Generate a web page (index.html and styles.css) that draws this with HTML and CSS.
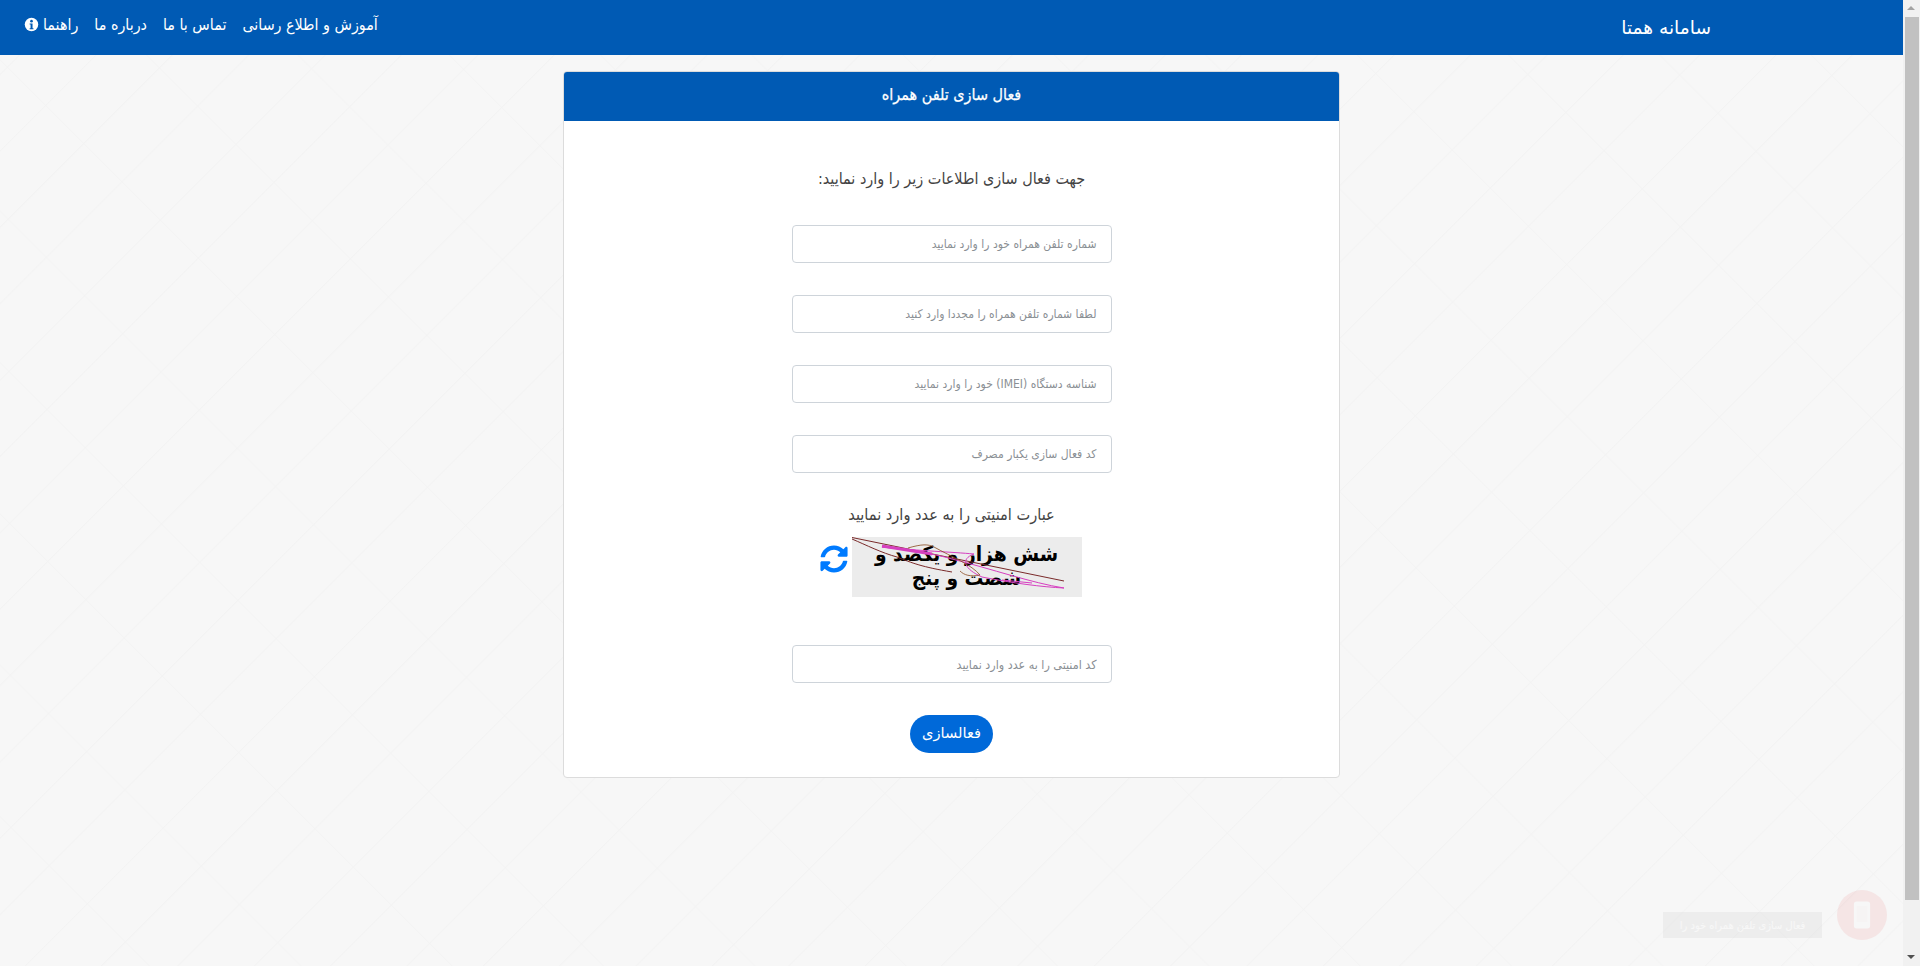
FILE: index.html
```html
<!DOCTYPE html>
<html lang="fa" dir="rtl">
<head>
<meta charset="utf-8">
<title>سامانه همتا</title>
<link rel="stylesheet" href="styles.css">
</head>
<body>
<div class="app">
  <div class="page">
    <header class="navbar">
      <a class="brand">سامانه همتا</a>
      <nav class="nav">
        <a class="nav-link">آموزش و اطلاع رسانی</a>
        <a class="nav-link">تماس با ما</a>
        <a class="nav-link">درباره ما</a>
        <a class="nav-link help">راهنما
          <svg class="info" viewBox="0 0 16 16"><circle cx="8" cy="8" r="7.2" fill="#fff"/><circle cx="8" cy="4.4" r="1.4" fill="#005ab4"/><path d="M6 6.9h3.1v5h1v1.2H6v-1.2h1v-3.8H6z" fill="#005ab4"/></svg>
        </a>
      </nav>
    </header>
    <main class="main">
      <section class="card">
        <div class="card-head">فعال سازی تلفن همراه</div>
        <form class="card-body">
          <h2 class="lead">جهت فعال سازی اطلاعات زیر را وارد نمایید:</h2>
          <input class="field" type="text" placeholder="شماره تلفن همراه خود را وارد نمایید">
          <input class="field" type="text" placeholder="لطفا شماره تلفن همراه را مجددا وارد کنید">
          <input class="field" type="text" placeholder="شناسه دستگاه (IMEI) خود را وارد نمایید">
          <input class="field" type="text" placeholder="کد فعال سازی یکبار مصرف">
          <p class="cap-label">عبارت امنیتی را به عدد وارد نمایید</p>
          <div class="cap-row">
            <div class="captcha">
              <div class="cap-text">شش هزار و یکصد و<br>شصت و پنج</div>
              <svg class="cap-lines" viewBox="0 0 230 60" fill="none">
                <path d="M0 0.5L212 44" stroke="#7a2a2a" stroke-width="1"/>
                <path d="M0 2C14 8 30 16 45 20C60 26 70 30 100 35" stroke="#7a2a2a" stroke-width="1"/>
                <path d="M30 10C70 14 100 15 122 17C108 22 112 32 130 40C160 46 190 50 212 51C180 46 140 32 100 22C80 16 50 12 30 10Z" stroke="#d63fc0" stroke-width="1"/>
                <path d="M30 9L80 17" stroke="#d63fc0" stroke-width="3"/>
                <path d="M56 11C70 7 76 7 82 10C100 20 120 28 128 38C118 40 112 38 108 34" stroke="#8a4a20" stroke-width="0.8"/>
                <path d="M150 43L180 46" stroke="#d63fc0" stroke-width="1"/>
              </svg>
            </div>
            <svg class="refresh" viewBox="0 0 512 512"><path fill="#007bff" d="M370.72 133.28C339.458 104.008 298.888 87.962 255.848 88c-77.458.068-144.328 53.178-162.791 126.85-1.344 5.363-6.122 9.15-11.651 9.15H24.103c-7.498 0-13.194-6.807-11.807-14.176C33.933 94.924 134.813 8 256 8c66.448 0 126.791 26.136 171.315 68.685L463.03 40.97C478.149 25.851 504 36.559 504 57.941V192c0 13.255-10.745 24-24 24H345.941c-21.382 0-32.09-25.851-16.971-40.971l41.75-41.749zM32 296h134.059c21.382 0 32.09 25.851 16.971 40.971l-41.75 41.75c31.262 29.273 71.835 45.319 114.876 45.28 77.418-.07 144.315-53.144 162.787-126.849 1.344-5.363 6.122-9.15 11.651-9.15h57.304c7.498 0 13.194 6.807 11.807 14.176C478.067 417.076 377.187 504 256 504c-66.448 0-126.791-26.136-171.315-68.685L48.97 471.03C33.851 486.149 8 475.441 8 454.059V320c0-13.255 10.745-24 24-24z"/></svg>
          </div>
          <input class="field field-cap" type="text" placeholder="کد امنیتی را به عدد وارد نمایید">
          <button class="btn" type="button">فعالسازی</button>
        </form>
      </section>
    </main>
    <div class="float">
      <span class="float-label">فعال سازی تلفن همراه خود را</span>
      <span class="float-btn"><svg viewBox="0 0 20 32" class="phone"><rect x="1" y="1" width="18" height="30" rx="3" fill="#fff"/><rect x="4" y="6" width="12" height="18" fill="#f5d5d5"/></svg></span>
    </div>
  </div>
  <aside class="scrollbar" dir="ltr">
    <span class="arrow up"></span>
    <span class="thumb"></span>
    <span class="arrow down"></span>
  </aside>
</div>
</body>
</html>
```
FILE: styles.css
```css
*{box-sizing:border-box}
html,body{margin:0;height:100%;overflow:hidden}
body{font-family:"DejaVu Sans Condensed","DejaVu Sans",sans-serif;font-stretch:condensed;color:#212529;font-size:14px;background:#f6f6f6}
.app{display:flex;height:966px;direction:ltr}
.page{flex:1;position:relative;direction:rtl;overflow:hidden;
background-color:#f7f7f7;
background-image:
 repeating-linear-gradient(135deg,transparent 0 52px,#f3f3f3 52.5px,transparent 54px),
 repeating-linear-gradient(45deg,transparent 0 105px,#f4f4f4 105.5px,transparent 107px);}
.navbar{height:55px;background:#005ab4;display:flex;align-items:center;justify-content:space-between;padding:0 16px}
.brand{color:#fff;font-family:"DejaVu Sans",sans-serif;font-stretch:normal;font-size:18.6px;margin-right:176px}
.nav{display:flex}
.nav-link{color:#fff;font-size:15.9px;padding:0 8px;margin-top:-6px;display:flex;align-items:center;gap:4px}
.info{width:15px;height:15px}
.main{display:flex;justify-content:center;padding-top:16px}
.card{width:777px;background:#fff;border:1px solid #dcdcdc;border-radius:4px;height:707px;overflow:hidden}
.card-head{height:50px;padding-bottom:4px;background:#005ab4;color:#fff;font-size:16px;-webkit-text-stroke:.25px #fff;display:flex;align-items:center;justify-content:center;margin:-1px;border-radius:4px 4px 0 0;font-weight:400}
.card-body{display:flex;flex-direction:column;align-items:center}
.lead{font-weight:400;font-size:16px;color:#444;margin:48px 0 0;line-height:22px}
.field{display:block;width:320px;height:38px;margin-top:32px;border:1px solid #ced4da;border-radius:4px;padding:0 14px;font:12px "DejaVu Sans Condensed","DejaVu Sans",sans-serif;font-stretch:condensed;background:#fff;direction:rtl}
.lead + .field{margin-top:35px}
.field::placeholder{color:#8a8f94;opacity:1}
.cap-label{margin:31px 0 0;font-size:16.2px;color:#444;line-height:22px}
.cap-row{display:flex;align-items:center;gap:4px;margin-top:11px;margin-right:2px;width:262px}
.captcha{position:relative;width:230px;height:60px;background:#ececec;direction:rtl;flex:none}
.cap-text{font:700 20.8px/24px "DejaVu Sans Condensed","DejaVu Sans",sans-serif;font-stretch:condensed;color:#000;text-align:center;padding:5px 2px 0}
.cap-lines{position:absolute;inset:0;width:100%;height:100%}
.refresh{width:28px;height:28px;margin-bottom:16px;flex:none}
.field-cap{margin-top:48px;font-size:12.4px}
.btn{margin-top:32px;width:83px;height:38px;border:0;border-radius:19px;background:#0069d9;color:#fff;font:500 14.6px "DejaVu Sans",sans-serif;padding:0 0 3px}
.float{position:absolute;left:1663px;top:890px;display:flex;flex-direction:row-reverse;align-items:center;gap:15px;width:225px;opacity:.08}
.float-label{width:159px;height:26px;background:#888;color:#fff;font-size:11px;display:flex;align-items:center;justify-content:center;margin-top:20px;white-space:nowrap;overflow:hidden}
.float-btn{width:50px;height:50px;border-radius:50%;background:#e02020;display:flex;align-items:center;justify-content:center}
.phone{width:18px;height:30px}
.scrollbar{width:17px;background:#f1f1f1;display:flex;flex-direction:column;align-items:center}
.arrow{width:17px;height:17px;flex:none;position:relative}
.up::after,.down::after{content:"";position:absolute;left:4px;border:4.5px solid transparent}
.up::after{top:2px;border-bottom-color:#a3a3a3}
.down::after{top:6px;border-top-color:#505050}
.thumb{width:14px;flex:1;background:#c1c1c1}
.down{margin-top:49px}
```
